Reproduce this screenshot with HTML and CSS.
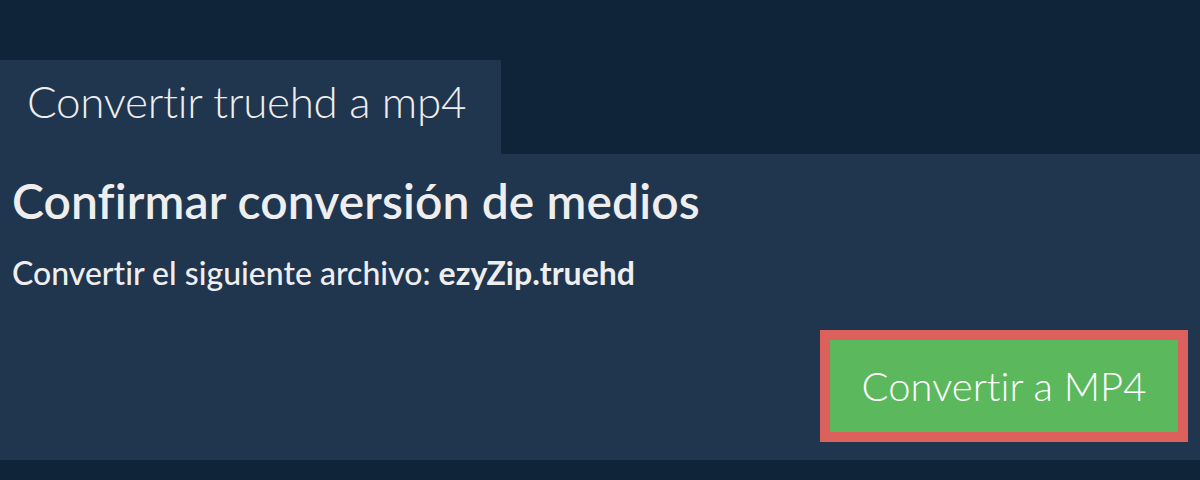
FILE: index.html
```html
<!DOCTYPE html>
<html>
<head>
  <title>Convertir truehd a mp4</title>
  <link rel="stylesheet" href="styles.css">
</head>
<body>
  <div class="page">
    <div class="tab-row">
      <div class="tab">Convertir truehd a mp4</div>
    </div>
    <div class="panel">
      <h2>Confirmar conversión de medios</h2>
      <p class="file-line">Convertir el siguiente archivo: <strong>ezyZip.truehd</strong></p>
      <div class="actions">
        <button class="convert-btn">Convertir a MP4</button>
      </div>
    </div>
  </div>
</body>
</html>
```

FILE: styles.css
```css
/* Page layout */
body {
  margin: 0;
  background-color: #0f2339;
  font-family: Lato, "Open Sans", sans-serif;
  color: #eeeeee;
  font-variant-ligatures: none;
}
.page {
  padding-top: 60px;
  padding-bottom: 20px;
}
.tab-row {
  display: flex;
}
.tab {
  width: 501px;
  height: 94px;
  box-sizing: border-box;
  padding-left: 27px;
  padding-top: 15px;
  background-color: #20354e;
  font-size: 44px;
  font-weight: 300;
  letter-spacing: -0.3px;
}
.panel {
  background-color: #20354e;
  height: 306px;
  box-sizing: border-box;
  padding: 18px 12px 0 12px;
}
.panel h2 {
  margin: 0;
  font-size: 48px;
  font-weight: 600;
  letter-spacing: 0.1px;
  font-variant-ligatures: common-ligatures;
}
.panel .file-line {
  margin: 24px 0 0 0;
  font-size: 32px;
  font-weight: 500;
}
.panel .file-line strong {
  font-weight: 700;
}
.actions {
  display: flex;
  justify-content: flex-end;
  margin-top: 38px;
}
.convert-btn {
  width: 368px;
  height: 112px;
  border: 10px solid #dc605c;
  background-color: #5cb85c;
  color: #ffffff;
  font-family: Lato, sans-serif;
  font-size: 40px;
  font-weight: 300;
  font-variant-ligatures: none;
  padding: 0;
}
```
